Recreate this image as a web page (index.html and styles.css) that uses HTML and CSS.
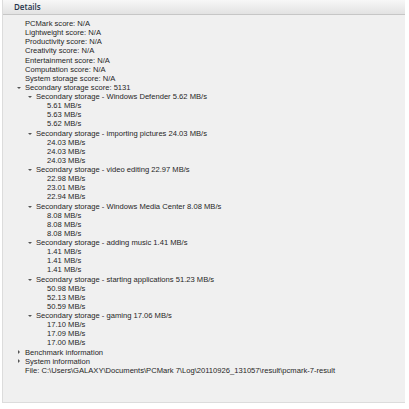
FILE: index.html
```html
<!DOCTYPE html>
<html lang="en">
<head>
  <meta charset="UTF-8" />
  <title>Details</title>
  <link rel="stylesheet" href="styles.css">
</head>
<body>
  <div class="panel">
    <div class="panel-header">Details</div>
    <ul class="tree">
      <li class="leaf">PCMark score: N/A</li>
      <li class="leaf">Lightweight score: N/A</li>
      <li class="leaf">Productivity score: N/A</li>
      <li class="leaf">Creativity score: N/A</li>
      <li class="leaf">Entertainment score: N/A</li>
      <li class="leaf">Computation score: N/A</li>
      <li class="leaf">System storage score: N/A</li>
      <li class="open">Secondary storage score: 5131
        <ul class="tree sub">
          <li class="open">Secondary storage - Windows Defender 5.62 MB/s
            <ul class="tree sub">
              <li class="leaf">5.61 MB/s</li>
              <li class="leaf">5.63 MB/s</li>
              <li class="leaf">5.62 MB/s</li>
            </ul>
          </li>
          <li class="open">Secondary storage - importing pictures 24.03 MB/s
            <ul class="tree sub">
              <li class="leaf">24.03 MB/s</li>
              <li class="leaf">24.03 MB/s</li>
              <li class="leaf">24.03 MB/s</li>
            </ul>
          </li>
          <li class="open">Secondary storage - video editing 22.97 MB/s
            <ul class="tree sub">
              <li class="leaf">22.98 MB/s</li>
              <li class="leaf">23.01 MB/s</li>
              <li class="leaf">22.94 MB/s</li>
            </ul>
          </li>
          <li class="open">Secondary storage - Windows Media Center 8.08 MB/s
            <ul class="tree sub">
              <li class="leaf">8.08 MB/s</li>
              <li class="leaf">8.08 MB/s</li>
              <li class="leaf">8.08 MB/s</li>
            </ul>
          </li>
          <li class="open">Secondary storage - adding music 1.41 MB/s
            <ul class="tree sub">
              <li class="leaf">1.41 MB/s</li>
              <li class="leaf">1.41 MB/s</li>
              <li class="leaf">1.41 MB/s</li>
            </ul>
          </li>
          <li class="open">Secondary storage - starting applications 51.23 MB/s
            <ul class="tree sub">
              <li class="leaf">50.98 MB/s</li>
              <li class="leaf">52.13 MB/s</li>
              <li class="leaf">50.59 MB/s</li>
            </ul>
          </li>
          <li class="open">Secondary storage - gaming 17.06 MB/s
            <ul class="tree sub">
              <li class="leaf">17.10 MB/s</li>
              <li class="leaf">17.09 MB/s</li>
              <li class="leaf">17.00 MB/s</li>
            </ul>
          </li>
        </ul>
      </li>
      <li class="closed">Benchmark information</li>
      <li class="closed">System information</li>
      <li class="leaf">File: C:\Users\GALAXY\Documents\PCMark 7\Log\20110926_131057\result\pcmark-7-result</li>
    </ul>
  </div>
</body>
</html>
```
FILE: styles.css
```css
body {
  margin: 0;
  background: #ffffff;
  font-family: "Liberation Sans", Arial, sans-serif;
  color: #262626;
}
.panel {
  margin: 0 4px 0 2px;
  height: 402px;
  background: #f0f0f0;
  border-left: 1px solid #dcdcdc;
  border-bottom: 1px solid #dcdcdc;
}
.panel-header {
  height: 14px;
  line-height: 14px;
  padding-left: 11px;
  font-family: "Open Sans", sans-serif;
  font-size: 8px;
  font-weight: 600;
  color: #25344a;
  background: linear-gradient(#f7f7f7, #e2e2e2);
  border-bottom: 1px solid #c6c6c6;
}
.tree {
  list-style: none;
  margin: 0;
  padding: 4px 0 0 22px;
  font-size: 7.6px;
  line-height: 9.13px;
}
.tree.sub {
  padding: 0 0 0 11px;
}
.tree li {
  position: relative;
  white-space: nowrap;
}
.open::before,
.closed::before {
  content: "";
  position: absolute;
  left: -8px;
  top: 4px;
  border-style: solid;
}
.open::before {
  border-width: 2.5px 2px 0 2px;
  border-color: #555 transparent transparent transparent;
}
.closed::before {
  top: 2.5px;
  left: -7px;
  border-width: 2px 0 2px 2.5px;
  border-color: transparent transparent transparent #555;
}
```
